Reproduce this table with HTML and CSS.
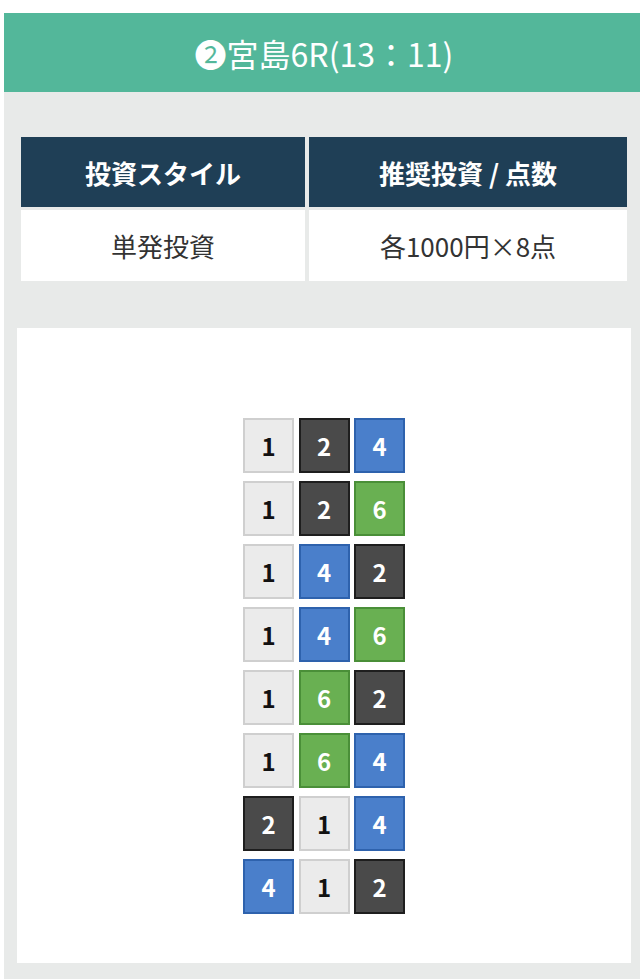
FILE: index.html
```html
<!DOCTYPE html>
<html lang="ja">
<head>
<meta charset="utf-8">
<link rel="stylesheet" href="styles.css">
</head>
<body>
<div class="wrap">
  <h2 class="title">❷宮島6R(13：11)</h2>
  <div class="panel">
    <div class="info">
      <div class="th">投資スタイル</div>
      <div class="th">推奨投資 / 点数</div>
      <div class="td">単発投資</div>
      <div class="td">各1000円×8点</div>
    </div>
    <div class="card">
      <div class="grid">
        <span class="t w">1</span><span class="t k">2</span><span class="t b">4</span>
        <span class="t w">1</span><span class="t k">2</span><span class="t g">6</span>
        <span class="t w">1</span><span class="t b">4</span><span class="t k">2</span>
        <span class="t w">1</span><span class="t b">4</span><span class="t g">6</span>
        <span class="t w">1</span><span class="t g">6</span><span class="t k">2</span>
        <span class="t w">1</span><span class="t g">6</span><span class="t b">4</span>
        <span class="t k">2</span><span class="t w">1</span><span class="t b">4</span>
        <span class="t b">4</span><span class="t w">1</span><span class="t k">2</span>
      </div>
    </div>
  </div>
</div>
</body>
</html>
```

FILE: styles.css
```css
html, body {
  margin: 0;
  padding: 0;
  background: #ffffff;
  overflow-x: hidden;
}
body {
  font-family: "Noto Sans CJK JP", "Noto Sans", sans-serif;
}
.wrap {
  width: 640px;
  margin: 13px 0 0 4px;
}
.title {
  margin: 0;
  height: 79px;
  background: #53b79a;
  color: #ffffff;
  font-size: 32px;
  font-weight: 400;
  line-height: 80px;
  text-align: center;
}
.panel {
  background: #e8eae9;
  padding: 45px 13px 17px;
}
.info {
  display: grid;
  grid-template-columns: 284px 318px;
  column-gap: 4px;
  row-gap: 3px;
  margin: 0 4px 47px;
}
.th {
  background: #1f3f56;
  color: #ffffff;
  font-weight: 700;
  font-size: 26px;
  height: 70px;
  display: flex;
  align-items: center;
  justify-content: center;
}
.td {
  background: #ffffff;
  color: #333333;
  font-size: 26px;
  height: 71px;
  display: flex;
  align-items: center;
  justify-content: center;
}
.card {
  background: #ffffff;
  padding: 90px 0 49px;
  display: flex;
  justify-content: center;
}
.grid {
  display: grid;
  grid-template-columns: repeat(3, 51px);
  grid-auto-rows: 55px;
  column-gap: 4.5px;
  row-gap: 8px;
}
.t {
  box-sizing: border-box;
  border: 2px solid;
  display: flex;
  align-items: center;
  justify-content: center;
  font-size: 24px;
  font-weight: 700;
}
.w { background: #ebebeb; border-color: #cfcfcf; color: #111111; }
.k { background: #4a4a4a; border-color: #1e1e1e; color: #ffffff; }
.b { background: #4a7fcb; border-color: #2e62ad; color: #ffffff; }
.g { background: #69b052; border-color: #4a8f38; color: #ffffff; }
```
